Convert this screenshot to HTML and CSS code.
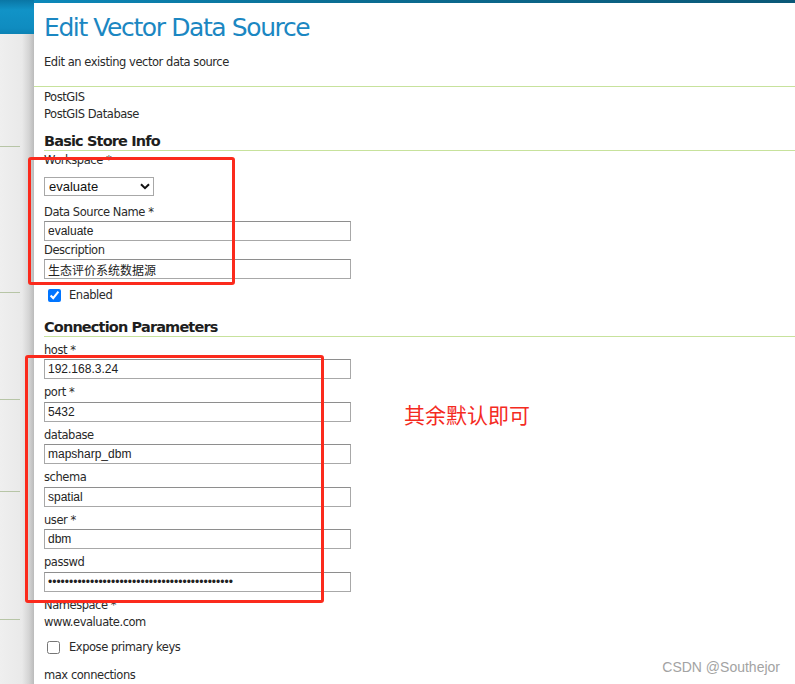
FILE: index.html
```html
<!DOCTYPE html>
<html lang="en">
<head>
<meta charset="utf-8">
<title>Edit Vector Data Source</title>
<link rel="stylesheet" href="styles.css">
</head>
<body>
<div class="shell">
  <aside class="sidebar">
    <div class="nav-item"></div>
    <div class="nav-item"></div>
    <div class="nav-item"></div>
    <div class="nav-item"></div>
    <div class="nav-item"></div>
  </aside>
  <main class="panel">
    <header class="page-header">
      <h1 class="title">Edit Vector Data Source</h1>
      <p class="desc">Edit an existing vector data source</p>
    </header>
    <div class="store-type">
      <div class="line">PostGIS</div>
      <div class="line">PostGIS Database</div>
    </div>

    <section class="group basic">
      <h2 class="section-title first">Basic Store Info</h2>
      <div class="field ws">
        <label class="label">Workspace *</label>
        <div class="select-wrap">
          <select class="select"><option>evaluate</option></select>
          <svg class="chev" width="10" height="7" viewBox="0 0 10 7"><path d="M1 1.2 L5 5.2 L9 1.2" fill="none" stroke="#111" stroke-width="2"/></svg>
        </div>
      </div>
      <div class="field">
        <label class="label">Data Source Name *</label>
        <input class="input" type="text" value="evaluate">
      </div>
      <div class="field">
        <label class="label">Description</label>
        <input class="input cjk" type="text" value="生态评价系统数据源">
      </div>
      <div class="check-row enabled">
        <input class="check" type="checkbox" checked>
        <span>Enabled</span>
      </div>
    </section>

    <section class="group conn">
      <h2 class="section-title second">Connection Parameters</h2>
      <div class="field">
        <label class="label">host *</label>
        <input class="input" type="text" value="192.168.3.24">
      </div>
      <div class="field">
        <label class="label">port *</label>
        <input class="input" type="text" value="5432">
      </div>
      <div class="field">
        <label class="label">database</label>
        <input class="input" type="text" value="mapsharp_dbm">
      </div>
      <div class="field">
        <label class="label">schema</label>
        <input class="input" type="text" value="spatial">
      </div>
      <div class="field">
        <label class="label">user *</label>
        <input class="input" type="text" value="dbm">
      </div>
      <div class="field">
        <label class="label">passwd</label>
        <input class="input" type="password" value="11111111111111111111111111111111111111111111">
      </div>
      <div class="field static">
        <label class="label">Namespace *</label>
        <div class="line">www.evaluate.com</div>
      </div>
      <div class="check-row expose">
        <input class="check" type="checkbox">
        <span>Expose primary keys</span>
      </div>
      <div class="label maxconn">max connections</div>
    </section>
  </main>

  <div class="mark mark-basic"></div>
  <div class="mark mark-conn"></div>
  <div class="note">其余默认即可</div>
  <div class="watermark">CSDN @Southejor</div>
</div>
</body>
</html>
```
FILE: styles.css
```css
* { box-sizing: border-box; }
html, body { margin: 0; padding: 0; }
body {
  width: 795px;
  height: 684px;
  overflow: hidden;
  background: #fff;
  font-family: "DejaVu Sans", Verdana, sans-serif;
  color: #2a2a2a;
}
.shell {
  position: relative;
  display: grid;
  grid-template-columns: 34px 1fr;
  height: 684px;
  background:
    linear-gradient(to right, #0c8cbf, #0b6f95 40%, #0a5877) top left / 100% 3px no-repeat,
    #fff;
}
.sidebar {
  display: grid;
  grid-template-rows: 147px 146px 107px 92px 128px;
  align-content: start;
  background:
    linear-gradient(to bottom, #0a76a5 0, #1193c7 10px, #0f8cc0 28px, #0c82b4 34px, transparent 34px),
    linear-gradient(to right, #efefef 0, #e9e9e9 22px, #d4d4d4 29px, #bbbbbb 34px);
}
.nav-item {
  width: 20px;
  border-bottom: 1px solid #b7c5a6;
}
.panel {
  margin-top: 3px;
  background: #fff;
  border-top-left-radius: 9px;
  padding: 10px 0 0 10px;
  font-size: 11.5px;
  letter-spacing: -0.45px;
  line-height: 17px;
}
.page-header {
  margin-left: -10px;
  padding: 0 0 15px 10px;
  border-bottom: 1px solid #c7e29c;
}
.title {
  margin: 0;
  font-weight: normal;
  font-size: 25px;
  line-height: 30px;
  letter-spacing: -1.4px;
  color: #1b87c2;
}
.desc {
  margin: 11px 0 0;
  line-height: 17px;
}
.store-type { padding-top: 2px; }
.line { line-height: 17px; }
.section-title {
  margin: 0;
  font-size: 14.5px;
  font-weight: bold;
  line-height: 17px;
  letter-spacing: -0.85px;
  color: #1e1e1e;
  border-bottom: 1px solid #c7e29c;
}
.section-title.first { margin-top: 9.5px; }
.section-title.second { margin-top: 14.5px; margin-bottom: 5px; }
.field {
  display: flex;
  flex-direction: column;
  align-items: flex-start;
}
.basic .field { margin-bottom: 0.5px; }
.conn .field { margin-bottom: 5px; }
.label {
  display: block;
  line-height: 17px;
  margin-bottom: 0.5px;
}
.basic .field.ws { margin-top: 1px; margin-bottom: 7.5px; }
.field.ws .label { margin-bottom: 8.5px; }
.input {
  width: 307px;
  height: 20px;
  margin: 0;
  padding: 0 3px;
  border: 1px solid #a8a8a8;
  border-top-color: #8e8e8e;
  border-radius: 0;
  font-family: "Liberation Sans", Arial, sans-serif;
  font-size: 12px;
  letter-spacing: 0;
  color: #222;
  background: #fff;
  outline: none;
}
.input.cjk { font-family: "Liberation Sans", "Noto Sans CJK SC", sans-serif; }
.select-wrap {
  position: relative;
  width: 110px;
  height: 19px;
}
.select {
  appearance: none;
  -webkit-appearance: none;
  width: 110px;
  height: 19px;
  margin: 0;
  padding: 0 0 0 4px;
  border: 1px solid #a8a8a8;
  border-radius: 0;
  background: #fff;
  font-family: "Liberation Sans", Arial, sans-serif;
  font-size: 13px;
  letter-spacing: 0;
  color: #111;
}
.chev {
  position: absolute;
  right: 4px;
  top: 6px;
  pointer-events: none;
}
.check-row {
  display: flex;
  align-items: center;
  height: 17px;
}
.check-row span { margin-left: 8px; }
.check {
  width: 13px;
  height: 13px;
  margin: 0 0 0 4px;
  accent-color: #0075ff;
}
.check-row.enabled { margin-top: 8px; }
.check-row.expose { margin-top: 8px; }
.check-row.expose .check { margin-left: 3px; }
.check-row.expose span { margin-left: 9px; }
.conn .field.static { margin-bottom: 0; }
.field.static .label { margin-bottom: 0; }
.maxconn { margin-top: 11px; }

/* annotations drawn over the screenshot */
.mark {
  position: absolute;
  border: 3px solid #fb2a1c;
  border-radius: 3px;
  pointer-events: none;
}
.mark-basic { left: 28px; top: 157px; width: 207px; height: 128px; }
.mark-conn { left: 25px; top: 355px; width: 299px; height: 248px; }
.note {
  position: absolute;
  left: 404px;
  top: 401px;
  font-family: "Noto Sans CJK SC", sans-serif;
  font-size: 21px;
  line-height: 26px;
  color: #f42b1f;
}
.watermark {
  position: absolute;
  right: 15px;
  top: 658px;
  font-family: "Liberation Sans", Arial, sans-serif;
  font-size: 14px;
  line-height: 18px;
  color: #a3a3a3;
}
```
